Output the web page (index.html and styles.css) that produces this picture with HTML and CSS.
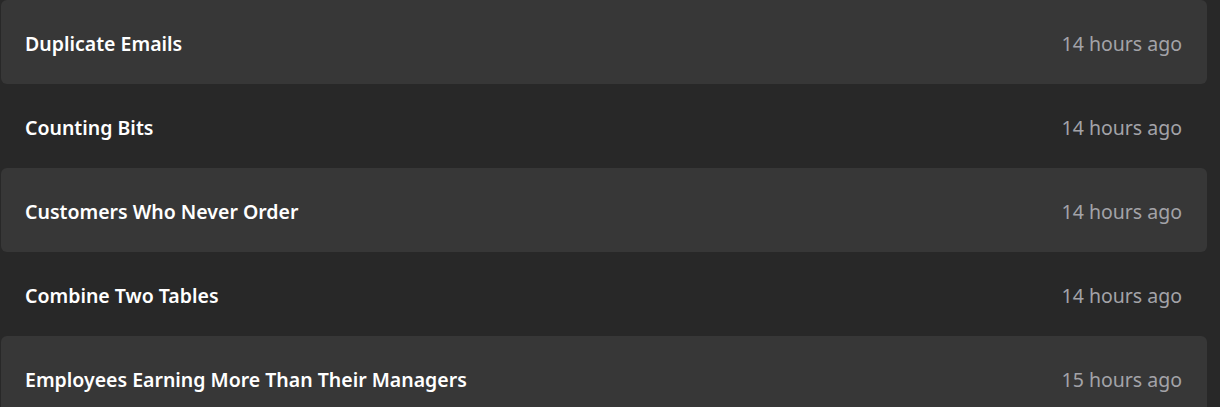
FILE: index.html
```
<!DOCTYPE html>
<html lang="en">
<head>
<meta charset="utf-8">
<title>Recent submissions</title>
<link rel="stylesheet" href="styles.css">
</head>
<body>
<div class="list">
  <div class="row shaded"><span class="title">Duplicate Emails</span><span class="time">14 hours ago</span></div>
  <div class="row"><span class="title">Counting Bits</span><span class="time">14 hours ago</span></div>
  <div class="row shaded"><span class="title">Customers Who Never Order</span><span class="time">14 hours ago</span></div>
  <div class="row"><span class="title">Combine Two Tables</span><span class="time">14 hours ago</span></div>
  <div class="row shaded"><span class="title">Employees Earning More Than Their Managers</span><span class="time">15 hours ago</span></div>
</div>
</body>
</html>
```
FILE: styles.css
```
html, body {
  margin: 0;
  padding: 0;
  background: #282828;
  overflow: hidden;
}
body {
  font-family: "Noto Sans", "Open Sans", sans-serif;
}
.list {
  display: flex;
  flex-direction: column;
  width: 1206px;
  margin-left: 1px;
}
.row {
  height: 84px;
  display: flex;
  align-items: center;
  justify-content: space-between;
  padding: 2px 25px 0 24px;
  box-sizing: border-box;
  border-radius: 6px;
  font-size: 19.5px;
}
.row.shaded {
  background: #373737;
}
.title {
  color: #ffffff;
  font-weight: 600;
}
.time {
  color: #a3a3a8;
}
```
